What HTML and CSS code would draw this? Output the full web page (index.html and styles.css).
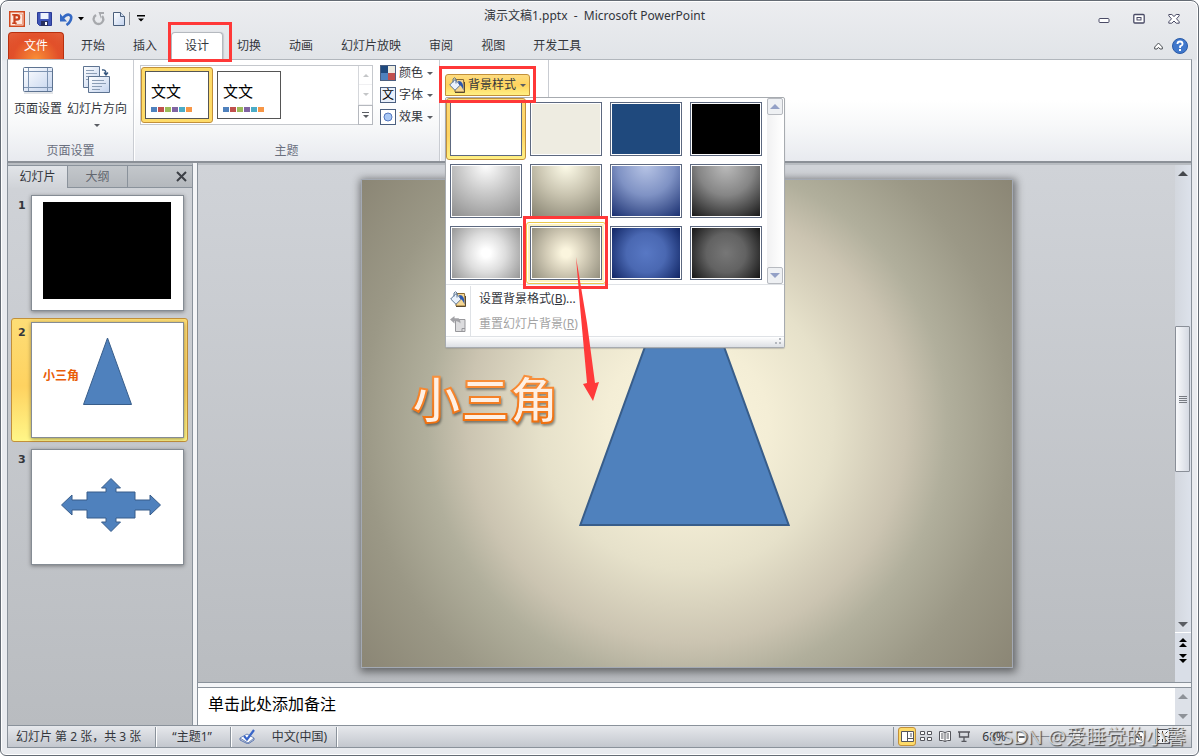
FILE: index.html
```html
<!DOCTYPE html>
<html lang="zh-CN">
<head>
<meta charset="utf-8">
<title>演示文稿1.pptx - Microsoft PowerPoint</title>
<link rel="stylesheet" href="styles.css">
</head>
<body>
<svg class="defs" width="0" height="0" aria-hidden="true">
  <defs>
    <linearGradient id="paper" x1="0" y1="0" x2="1" y2="1"><stop offset="0" stop-color="#fff"/><stop offset="1" stop-color="#c3d3ee"/></linearGradient>
    <linearGradient id="art" x1="0" y1="0" x2="0" y2="1"><stop offset="0" stop-color="#fb9a4b"/><stop offset="1" stop-color="#ee6a06"/></linearGradient>
    <symbol id="bucket" viewBox="0 0 16 16">
      <path d="M7 2.500h7.500l1 12.500h-9.500z" fill="#f5d692" stroke="#8a6a30"/>
      <path d="M15.500 5v10.500H6" fill="none" stroke="#5a4a30"/>
      <path d="M.7 8 6 2.600l5.300 5.400L6 13.300z" fill="#eaf2fc" stroke="#5b7594"/>
      <path d="M4 5.500V2Q5.500-.5 7 2v4.500" fill="none" stroke="#5b7594"/>
      <path d="M9 4Q15 3.500 14.500 13.500 12.500 8.500 10 7.500z" fill="#2b58b0"/>
    </symbol>
  </defs>
</svg>
<div class="window">
  <header class="titlebar">
    <div class="quick">
      <svg width="16" height="16" viewBox="0 0 16 16"><rect x=".75" y=".75" width="14.500" height="14.500" fill="#fde8df" stroke="#d1491f" stroke-width="1.500"/><path d="M10 3h3.500v10.500H6" fill="none" stroke="#eda184"/><path d="M5.500 12V4.200h2.300q2.400 0 2.400 2.200T7.800 8.600h-2" fill="none" stroke="#c8401c" stroke-width="2.200"/><path d="M3.200 3.700h3M3.200 12.300h4.500" stroke="#c8401c" stroke-width="1.500"/></svg>
      <i class="qsep"></i>
      <button class="icon" aria-label="保存"><svg width="15" height="14" viewBox="0 0 15 14"><path d="M.5.500h14v13h-12l-2-2z" fill="#4056b8" stroke="#2b3a94"/><path d="M3.500 1h8v6h-8z" fill="#eef3fd"/><path d="M4 9h7v5H4z" fill="#28305e"/><path d="M8 10h2v3H8z" fill="#fff"/></svg></button>
      <button class="icon undo" aria-label="撤消"><svg width="13" height="14" viewBox="0 0 13 14"><path d="M3 6Q6 2.200 9 2.700 12.500 3.700 10.500 8.500 9.500 11 6.500 13" fill="none" stroke="#3569c4" stroke-width="2.600"/><path d="M0 1.500v8h7z" fill="#3569c4"/></svg><svg width="6" height="4" viewBox="0 0 6 4"><path d="M0 0h6L3 3.500z"/></svg></button>
      <button class="icon" aria-label="重复"><svg width="13" height="14" viewBox="0 0 13 14"><path d="M4 3Q1 5 1.800 8 3 12 6.500 12T11.300 8Q11.500 6 10 4" fill="none" stroke="#a7a9ad" stroke-width="2.400"/><path d="M6.500 0H12v2H9v5z" fill="#a7a9ad"/></svg></button>
      <button class="icon" aria-label="新建"><svg width="12" height="14" viewBox="0 0 12 14"><path d="M.5.500h7l4 4v9H.5z" fill="url(#paper)" stroke="#4a5f7c"/><path d="M7.500.5v4h4" fill="#cfdcef" stroke="#4a5f7c"/></svg></button>
      <i class="qsep"></i>
      <button class="icon" aria-label="自定义快速访问工具栏"><svg width="8" height="7" viewBox="0 0 8 7"><path d="M0 0h8v1.400H0zM1 3.500h6L4 6.500z"/></svg></button>
    </div>
    <h1>演示文稿1.pptx&nbsp; -&nbsp; Microsoft PowerPoint</h1>
    <div class="wincontrols">
      <button class="icon" aria-label="最小化"><svg width="12" height="12" viewBox="0 0 12 12"><rect x="1" y="5.500" width="10" height="4" rx="1" fill="#fff" stroke="#4a4b66"/></svg></button>
      <button class="icon" aria-label="还原"><svg width="12" height="12" viewBox="0 0 12 12"><rect x=".8" y="1.500" width="10.400" height="8.500" rx="1" fill="#fff" stroke="#4a4b66" stroke-width="1.300"/><rect x="4" y="4.500" width="4" height="2.500" fill="#fff" stroke="#4a4b66"/></svg></button>
      <button class="icon" aria-label="关闭"><svg width="12" height="12" viewBox="0 0 12 12"><path d="M.8 1.500h3L6 3.500l2.200-2h3v1.300L8.500 5.800l2.700 3v1.400h-3L6 8l-2.200 2.200h-3V8.800l2.700-3L.8 2.800z" fill="#fff" stroke="#4a4b66"/></svg></button>
    </div>
  </header>
  <nav class="tabs">
    <button class="tab file">文件</button>
    <button class="tab">开始</button>
    <button class="tab">插入</button>
    <div class="tabwrap"><button class="tab active">设计</button><span class="mark mark-tab"></span></div>
    <button class="tab">切换</button>
    <button class="tab">动画</button>
    <button class="tab">幻灯片放映</button>
    <button class="tab">审阅</button>
    <button class="tab">视图</button>
    <button class="tab">开发工具</button>
    <div class="tabtools">
      <button class="icon" aria-label="功能区最小化"><svg width="9" height="8" viewBox="0 0 9 8"><path d="M.7 5 4.500 1l3.800 4v2H6L4.500 5.300 3 7H.7z" fill="#fff" stroke="#4c5056"/></svg></button>
      <button class="icon" aria-label="帮助"><svg width="16" height="16" viewBox="0 0 16 16"><circle cx="8" cy="8" r="7.500" fill="#4078cc" stroke="#2a5ba8"/><path d="M5.400 6Q5.500 3.500 8 3.500T10.600 6Q10.500 7.300 8.100 8.300V10" fill="none" stroke="#fff" stroke-width="1.800"/><rect x="7" y="11" width="2" height="2" fill="#fff"/></svg></button>
    </div>
  </nav>
  <main class="body">
    <section class="ribbon">
      <div class="group page">
        <div class="gbody">
          <button class="big"><svg width="32" height="28" viewBox="0 0 32 28"><rect x="1.500" y="1.500" width="29" height="24" rx="1" fill="url(#paper)" stroke="#5d7391"/><path d="M6.500 2v23M25.500 2v23M2 5.500h28M2 21.500h28" stroke="#7e94b2" fill="none"/><path d="M2 27h29" stroke="#c8ccd2"/></svg><span>页面设置</span></button>
          <button class="big"><svg width="28" height="28" viewBox="0 0 28 28"><path d="M.5.500h16v21H.5z" fill="url(#paper)" stroke="#5d7391"/><path d="M3 4.500h8M3 7.500h11M3 10.500h9M3 13.500h4" stroke="#8b9db5"/><path d="M5.500 10.500h21v16h-21z" fill="url(#paper)" stroke="#5d7391"/><path d="M9 14.500h12M9 17.500h14M9 20.500h10M9 23.500h8" stroke="#8b9db5"/><path d="M19 4q4-1 4 4M21 6.500l2 2.500 2-2.500" fill="none" stroke="#35567f" stroke-width="1.300"/></svg><span>幻灯片方向</span><i class="down"></i></button>
        </div>
        <h2>页面设置</h2>
      </div>
      <div class="group theme">
        <div class="gbody">
          <div class="gallery">
            <button class="themeitem selected"><span class="themecard">文文<span class="chips"><i class="c1"></i><i class="c2"></i><i class="c3"></i><i class="c4"></i><i class="c5"></i><i class="c6"></i></span></span></button>
            <button class="themeitem"><span class="themecard">文文<span class="chips"><i class="c1"></i><i class="c2"></i><i class="c3"></i><i class="c4"></i><i class="c5"></i><i class="c6"></i></span></span></button>
            <div class="gscroll">
              <button aria-label="上一行" disabled><i class="up"></i></button>
              <button aria-label="下一行" disabled><i class="down"></i></button>
              <button aria-label="其他"><i class="line"></i><i class="down"></i></button>
            </div>
          </div>
          <div class="options">
            <button class="opt"><svg width="16" height="16" viewBox="0 0 16 16"><path d="M0 0h8v8H0z" fill="#1f497d"/><path d="M8 0h8v8H8z" fill="#eeece1"/><path d="M0 8h8v8H0z" fill="#4f81bd"/><path d="M8 8h8v8H8z" fill="#c0504d"/><rect x=".5" y=".5" width="15" height="15" fill="none" stroke="#4b5f80"/></svg>颜色<i class="down"></i></button>
            <button class="opt"><span class="fonticon">文</span>字体<i class="down"></i></button>
            <button class="opt"><svg width="16" height="16" viewBox="0 0 16 16"><rect x=".5" y=".5" width="15" height="15" fill="#fff" stroke="#4b5f80"/><circle cx="8" cy="8" r="4" fill="#a9c8f5" stroke="#5578c0"/></svg>效果<i class="down"></i></button>
          </div>
        </div>
        <h2>主题</h2>
      </div>
      <div class="group background">
        <button class="bgbutton"><svg width="16" height="16"><use href="#bucket"/></svg>背景样式<i class="down"></i></button>
        <div class="menu">
          <div class="picker">
            <div class="swatches">
              <button class="swatch chosen" aria-label="样式 1"><i class="s1"></i></button>
              <button class="swatch" aria-label="样式 2"><i class="s2"></i></button>
              <button class="swatch" aria-label="样式 3"><i class="s3"></i></button>
              <button class="swatch" aria-label="样式 4"><i class="s4"></i></button>
              <button class="swatch" aria-label="样式 5"><i class="s5"></i></button>
              <button class="swatch" aria-label="样式 6"><i class="s6"></i></button>
              <button class="swatch" aria-label="样式 7"><i class="s7"></i></button>
              <button class="swatch" aria-label="样式 8"><i class="s8"></i></button>
              <button class="swatch" aria-label="样式 9"><i class="s9"></i></button>
              <button class="swatch hover" aria-label="样式 10"><i class="s10"></i><span class="mark mark-swatch"></span></button>
              <button class="swatch" aria-label="样式 11"><i class="s11"></i></button>
              <button class="swatch" aria-label="样式 12"><i class="s12"></i></button>
            </div>
            <div class="pscroll"><button aria-label="向上"><i class="up"></i></button><button aria-label="向下"><i class="down"></i></button></div>
          </div>
          <div class="commands">
            <button class="command"><span class="cicon"><svg width="16" height="16"><use href="#bucket"/></svg></span><span>设置背景格式(<u>B</u>)...</span></button>
            <button class="command" disabled><span class="cicon"><svg width="16" height="16" viewBox="0 0 16 16"><path d="M5.500 3.500h9.500v12h-9.500z" fill="#dcdcde" stroke="#97979b"/><path d="M12 15.500v-3h3" fill="none" stroke="#97979b"/><path d="M0 3.500 4.500 0v2.200h4q2 1 2 5.300-1.500-2.500-6-2.500v2.500z" fill="#a2a2a6"/></svg></span><span>重置幻灯片背景(<u>R</u>)</span></button>
          </div>
          <div class="grip"><svg width="8" height="8" viewBox="0 0 8 8"><path d="M5 0h2v2H5zM1 4h2v2H1zM5 4h2v2H5z" fill="#b4b8be"/></svg></div>
          <svg class="arrow" width="20" height="146" viewBox="0 0 20 146"><path d="M2 0 6 49l7 77-4 1 10 17 6-19-4 1-8-60z" fill="#ff3a3a"/></svg>
        </div>
        <span class="mark mark-button"></span>
      </div>
    </section>
    <section class="work">
      <aside class="panel">
        <div class="ptabs"><button class="ptab on">幻灯片</button><button class="ptab">大纲</button><button class="pclose" aria-label="关闭"><svg width="11" height="11" viewBox="0 0 11 11"><path d="M1 1l9 9M10 1l-9 9" stroke="#3c4046" stroke-width="2"/></svg></button></div>
        <ol class="slides">
          <li class="item"><b>1</b><svg class="thumb" viewBox="0 0 151 114"><path d="M11 6h128v97H11z"/></svg></li>
          <li class="item current"><b>2</b><svg class="thumb" viewBox="0 0 151 114"><path d="M75.500 15 99.500 81.500H51.500z" fill="#4f81bd" stroke="#385d8a"/><text x="11" y="57" class="arttext" font-size="12">小三角</text></svg></li>
          <li class="item"><b>3</b><svg class="thumb" viewBox="0 0 151 114"><path d="M79 28.500 88.500 38H84v4h19v8h15v-5l10.500 10-10.500 10v-5h-15v8H84v4h4.500L79 81.500 69.500 72H74v-4H55v-8H40v5L29.500 55 40 45v5h15v-8h19v-4h-4.500z" fill="#4f81bd" stroke="#385d8a"/></svg></li>
        </ol>
      </aside>
      <div class="editor">
        <div class="stage">
          <div class="canvas">
            <svg class="slide" viewBox="0 0 652 488">
              <path d="M323.500 58 428 346H219z" fill="#4f81bd" stroke="#385d8a" stroke-width="2"/>
              <text x="50" y="239" class="arttext large" font-size="49">小三角</text>
            </svg>
          </div>
          <div class="vscroll">
            <button aria-label="向上滚动"><i class="up"></i></button>
            <div class="track"><div class="knob"><i></i><i></i><i></i><i></i></div></div>
            <button aria-label="向下滚动"><i class="down"></i></button>
            <div class="pager">
              <button class="icon" aria-label="上一张幻灯片"><svg width="8" height="9" viewBox="0 0 8 9"><path d="M4 0l4 4H0zM4 5l4 4H0z"/></svg></button>
              <button class="icon" aria-label="下一张幻灯片"><svg width="8" height="9" viewBox="0 0 8 9"><path d="M0 0h8L4 4zM0 5h8L4 9z"/></svg></button>
            </div>
          </div>
        </div>
        <div class="notes"><label class="note">单击此处添加备注</label><div class="nscroll"><i class="up"></i><i class="down"></i></div></div>
      </div>
    </section>
    <footer class="status">
      <span class="cell first">幻灯片 第 2 张，共 3 张</span>
      <span class="cell">“主题1”</span>
      <span class="cell check"><svg width="17" height="15" viewBox="0 0 17 15"><path d="M1 9l7-4 7 4-6 5z" fill="#fff" stroke="#7088b8"/><path d="M1 9v2l8 4 6-4V9" fill="none" stroke="#5d78b4"/><path d="M5 7l3 3.500L15 1" fill="none" stroke="#3865c8" stroke-width="2.200"/></svg></span>
      <span class="cell">中文(中国)</span>
      <div class="views">
        <button class="view on" aria-label="普通视图"><svg width="13" height="11" viewBox="0 0 13 11"><path d="M.5.500h12v10H.5zM6.500 0v11M7 7.500h5M9 3h2M9 5h2" fill="#fff" stroke="#55565c"/></svg></button>
        <button class="view" aria-label="幻灯片浏览"><svg width="12" height="11" viewBox="0 0 12 11"><path d="M.5.500h4v3h-4zM7.500.500h4v3h-4zM.5 6.500h4v3h-4zM7.500 6.500h4v3h-4z" fill="#fff" stroke="#55565c"/></svg></button>
        <button class="view" aria-label="阅读视图"><svg width="12" height="11" viewBox="0 0 12 11"><path d="M6 1.500Q3 .2.500.500v9Q4 9 6 10.500 8 9 11.500 9.500v-9Q9 .2 6 1.500zv9M2 3h2.500M2 5h2.500M2 7h2.500M7.500 3H10M7.500 5H10M7.500 7H10" fill="#fff" stroke="#55565c"/></svg></button>
        <button class="view" aria-label="幻灯片放映"><svg width="12" height="11" viewBox="0 0 12 11"><path d="M0 1h12M1.500 1v5h9V1M6 6v4M3.500 10.500h5" fill="none" stroke="#55565c" stroke-width="1.300"/></svg></button>
      </div>
      <div class="zoom">
        <span>68%</span>
        <button class="icon" aria-label="缩小"><svg width="14" height="14" viewBox="0 0 14 14"><circle cx="7" cy="7" r="6" fill="#fff" stroke="#777b82"/><path d="M4 7h6" stroke="#333" stroke-width="1.500"/></svg></button>
        <input type="range" min="10" max="180" value="88" aria-label="显示比例">
        <button class="icon" aria-label="放大"><svg width="14" height="14" viewBox="0 0 14 14"><circle cx="7" cy="7" r="6" fill="#fff" stroke="#777b82"/><path d="M4 7h6M7 4v6" stroke="#333" stroke-width="1.500"/></svg></button>
        <button class="icon fit" aria-label="适应窗口"><svg width="15" height="15" viewBox="0 0 15 15"><rect x=".5" y=".5" width="14" height="14" fill="#f3f4f6" stroke="#55565c"/><path d="M7.500 2v3M7.500 10v3M2 7.500h3M10 7.500h3M2.500 2.500l2 2M12.500 2.500l-2 2M2.500 12.500l2-2M12.500 12.500l-2-2" stroke="#333"/></svg></button>
      </div>
      <span class="watermark">CSDN @爱睡觉的小馨</span>
    </footer>
  </main>
</div>
</body>
</html>
```
FILE: styles.css
```css
* { box-sizing: border-box; }
body { margin: 0; background: #fff; color: #33363c; font: 12px/16px "Noto Sans", "Noto Sans CJK SC", sans-serif; }
button { font: inherit; color: inherit; background: none; border: 0; padding: 0; }
h1, h2, ol { margin: 0; padding: 0; font: inherit; }
svg { display: block; flex: none; }
i { display: block; font-style: normal; }
.defs { position: absolute; }
.icon { display: flex; align-items: center; }
.up, .down { width: 0; height: 0; flex: none; border: 3px solid transparent; }
.down { border-top-color: #5a5d63; border-bottom: 0; }
.up { border-bottom-color: #5a5d63; border-top: 0; }
.mark { position: absolute; border: 3px solid #ff3838; pointer-events: none; z-index: 6; }

.window { min-height: 100vh; display: flex; flex-direction: column; padding: 0 6px; border: 1px solid #646b74; border-radius: 8px 8px 6px 6px; background: linear-gradient(#ecedf0, #e1e4e8 58px, #e9ebef 60px); box-shadow: inset 0 0 0 1px #fff; }
.titlebar { display: grid; grid-template-columns: 1fr auto 1fr; align-items: center; height: 31px; padding: 4px 12px 0 2px; }
.titlebar h1 { padding-bottom: 5px; }
.quick { display: flex; align-items: center; gap: 8px; }
.qsep { width: 1px; height: 13px; background: #8f9399; margin: 0 -3px 0 -4px; }
.quick .qsep + .icon { margin-left: 2px; }
.undo { gap: 5px; }
.wincontrols { display: flex; justify-content: flex-end; gap: 23px; }

.tabs { display: flex; height: 27px; padding-left: 1px; }
.tab { padding: 0 14px; height: 27px; }
.file { padding: 0 15px; margin-right: 3px; color: #fff; border: 1px solid #b8300f; border-bottom: 0; border-radius: 4px 4px 0 0; background: radial-gradient(ellipse at 50% 100%, #f98e35, #e2502a 60%, transparent), linear-gradient(#e5613c, #d8451f); }
.tabwrap { position: relative; }
.active { background: #fff; border: 1px solid #b5b9bf; border-bottom: 0; border-radius: 4px 4px 0 0; padding: 0 13px; box-shadow: 1px 0 1px #c7cacf; }
.mark-tab { inset: -10px -9px -3px -3px; }
.tabtools { display: flex; align-items: center; gap: 9px; margin-left: auto; padding-right: 4px; }

.body { flex: 1; display: flex; flex-direction: column; border: 1px solid #8a929b; border-top-color: #b1b6bc; margin-bottom: 7px; }
.ribbon { display: flex; height: 103px; background: linear-gradient(#fff 40%, #f7f8f9 65%, #e8eaef); border-bottom: 2px solid #8b9097; }
.group { display: flex; flex-direction: column; border-right: 1px solid #c9ccd2; box-shadow: 1px 0 #fff; }
.group h2 { margin-top: auto; padding-bottom: 2px; text-align: center; color: #6a6f7e; }
.page .gbody { display: flex; gap: 5px; padding: 6px 6px 0; }
.big { display: flex; flex-direction: column; align-items: center; gap: 7px; white-space: nowrap; }
.theme .gbody { display: flex; gap: 7px; padding: 5px 6px 0; }
.gallery { display: flex; height: 60px; width: 233px; border: 1px solid #c5c8cd; background: #fff; }
.themeitem { padding: 3px; border: 1px solid transparent; border-radius: 3px; margin: 1px 0 1px 0; }
.themeitem:nth-child(2) { margin-right: auto; }
.selected { border-color: #c2903a; background: #fedb69; }
.themecard { display: flex; flex-direction: column; justify-content: flex-end; gap: 6px; width: 64px; height: 48px; padding: 0 5px 6px; border: 1px solid #555; background: #fff; color: #000; font-size: 15px; line-height: 20px; text-align: left; }
.chips { display: flex; gap: 1px; }
.chips i { width: 6px; height: 5px; }
.c1 { background: #4f81bd; } .c2 { background: #c0504d; } .c3 { background: #9bbb59; } .c4 { background: #8064a2; } .c5 { background: #4bacc6; } .c6 { background: #f79646; }
.gscroll { display: grid; grid-template-rows: 1fr 1fr 1fr; width: 14px; border-left: 1px solid #d5d7db; }
.gscroll button { display: flex; flex-direction: column; align-items: center; justify-content: center; gap: 2px; border-bottom: 1px solid #d5d7db; }
.gscroll button:last-child { border: 1px solid #b5b8be; margin: 0 -1px -1px -1px; }
.gscroll :disabled { opacity: .35; }
.line { width: 7px; height: 1px; background: #5a5d63; }
.options { display: flex; flex-direction: column; gap: 6px; }
.opt { display: flex; align-items: center; gap: 3px; height: 16px; }
.opt .down { margin-left: 1px; }
.fonticon { width: 16px; height: 16px; border: 1px solid #4b5f80; background: #e9f0fb; color: #000; line-height: 13px; }

.background { position: relative; width: 109px; align-items: flex-start; padding: 14px 5px 0; }
.bgbutton { display: flex; align-items: center; gap: 3px; height: 22px; padding: 0 3px; border: 1px solid #c2903a; border-radius: 3px 3px 0 0; background: linear-gradient(#fddc80, #ffd35d 50%, #fff083); white-space: nowrap; }
.bgbutton .down { margin-left: 1px; }
.mark-button { inset: 6px 12px auto -1px; height: 37px; }
.menu { position: absolute; top: 37px; left: 5px; z-index: 5; width: 340px; background: #fff; border: 1px solid #a7abb0; border-radius: 2px; box-shadow: 0 1px 1px #8886; }
.picker { display: flex; justify-content: space-between; padding-right: 1px; border-bottom: 1px solid #dfe2e6; }
.swatches { display: grid; grid-template-columns: repeat(4, 80px); grid-auto-rows: 62px; }
.swatch { position: relative; padding: 3px; border: 1px solid transparent; border-radius: 3px; }
.swatch > i { height: 54px; border: 1px solid #5d6980; padding: 1px; background-color: #fff; box-shadow: inset 0 0 0 1px #fff; }
.chosen { border-color: #c2903a; background: linear-gradient(#fdd872, #fed566 60%, #fff083); }
.hover { border-color: #ecc94c; background: #fff3c0; box-shadow: inset 0 0 0 1px #fff; }
.swatch .s2 { background-color: #eeece1; }
.swatch .s3 { background-color: #1f497d; }
.swatch .s4 { background-color: #000; }
.s5 { background-image: radial-gradient(ellipse 90% 130% at 50% 0, #fff, #ccc 40%, #858585); }
.s6 { background-image: radial-gradient(ellipse 90% 130% at 50% 0, #fffdea, #c9c4b0 45%, #7d7968); }
.s7 { background-image: radial-gradient(ellipse 90% 130% at 50% 0, #b8c5e6, #7f92c4 45%, #0b2164); }
.s8 { background-image: radial-gradient(ellipse 90% 130% at 50% 0, #bcbcbc, #858585 45%, #080808); }
.s9 { background-image: radial-gradient(circle at 50% 50%, #fff 10%, #ddd 45%, #929292); }
.s10 { background-image: radial-gradient(circle at 50% 50%, #fbf5de 10%, #d3ccb7 45%, #8f8b7b); }
.s11 { background-image: radial-gradient(circle at 50% 50%, #5878c4, #4a68b2 45%, #0d215f); }
.s12 { background-image: radial-gradient(circle at 50% 50%, #777, #626262 45%, #111); }
.mark-swatch { inset: -7px -3px -6px -4px; }
.pscroll { display: flex; flex-direction: column; justify-content: space-between; width: 16px; background: linear-gradient(90deg, #f1f1f2, #fff); }
.pscroll button { display: flex; align-items: center; justify-content: center; height: 17px; border: 1px solid #b7bac0; border-radius: 2px; background: #eef0f3; }
.pscroll i { border-width: 5px; }
.pscroll .up { border-bottom-color: #93a0c6; border-top: 0; }
.pscroll .down { border-top-color: #93a0c6; border-bottom: 0; }
.commands { padding: 1px 0 0; }
.command { display: flex; align-items: center; width: 100%; height: 25px; gap: 8px; white-space: nowrap; }
.cicon { display: flex; align-items: center; width: 25px; height: 25px; padding-left: 4px; border-right: 1px solid #dfe2e6; }
.command:disabled { color: #a3a3a3; }
.grip { display: flex; justify-content: flex-end; align-items: center; height: 11px; border-top: 1px solid #dfe2e6; background: linear-gradient(#fff, #dde0e5); padding-right: 2px; }
.arrow { position: absolute; left: 128px; top: 159px; z-index: 7; overflow: visible; }

.work { flex: 1; display: grid; grid-template-columns: 185px minmax(0, 1fr); gap: 4px; background: #f4f5f7; border-bottom: 1px solid #8a929b; }
.panel { border-right: 1px solid #8a929b; background: linear-gradient(#d0d3d8, #b9bcc0); border-top: 2px solid #b9bdc2; }
.ptabs { display: grid; grid-template-columns: 60px 60px 1fr; height: 23px; border-top: 1px solid #8a929b; }
.ptab, .pclose { background: linear-gradient(#c3c7cb, #b4b8bd); border-right: 1px solid #8a929b; border-bottom: 1px solid #8a929b; color: #62666e; }
.pclose { display: flex; align-items: center; justify-content: flex-end; padding-right: 5px; border-right: 0; }
.ptab.on { background: linear-gradient(#e1e4e8, #d0d3d8); border-bottom: 0; color: #33363c; }
.slides { display: grid; gap: 3px; padding: 3px 4px 0 3px; list-style: none; }
.item { display: grid; grid-template-columns: 16px 153px; padding: 3px; border: 1px solid transparent; border-radius: 3px; }
.item b { padding-left: 3px; font: bold 11px/22px "DejaVu Sans", sans-serif; }
.current { border-color: #c2903a; background: linear-gradient(#fddd76, #fed260 55%, #fff688); }
.thumb { width: 153px; height: 116px; border: 1px solid #858c94; background: #fff; box-shadow: 0 1px 4px #0006; }
.arttext { font-family: "Noto Sans CJK SC", sans-serif; font-weight: bold; fill: #e95d08; }
.large { fill: #fff0e4; stroke: url(#art); stroke-width: 2; filter: drop-shadow(1px 2px 1px #0006); }

.editor { display: flex; flex-direction: column; gap: 4px; border-left: 1px solid #8a929b; }
.stage { flex: 1; display: flex; border-top: 2px solid #b9bdc2; border-bottom: 1px solid #8a929b; background: linear-gradient(#d0d3d8, #b9bcc0); }
.canvas { flex: 1; min-width: 0; display: flex; align-items: center; justify-content: center; padding: 14px; }
.slide { flex: 0 1 652px; min-width: 0; border: 1px solid #a3a9b3; background: radial-gradient(circle farthest-corner, #fbf5dd, #f4eed6 20%, #e6e1ca 36%, #cbc4b1 54%, #b1af9c 64%, #9b9886 80%, #8b8675); box-shadow: 1px 2px 8px 2px #0007; }
.vscroll { display: flex; flex-direction: column; width: 16px; background: linear-gradient(90deg, #d3d7de, #dde2eb); }
.vscroll > button { display: flex; align-items: center; justify-content: center; height: 16px; }
.vscroll .up, .vscroll .down { border-left-width: 5px; border-right-width: 5px; }
.vscroll .up { border-bottom-width: 5px; border-bottom-color: #45484d; }
.vscroll .down { border-top-width: 5px; }
.track { flex: 1; display: flex; flex-direction: column; padding: 0 1px 0 0; }
.track::before { content: ""; flex: 146; }
.track::after { content: ""; flex: 145; }
.knob { flex: 145; display: flex; flex-direction: column; align-items: center; justify-content: center; gap: 1px; border: 1px solid #8a8f98; border-radius: 1px; background: linear-gradient(90deg, #f8f9fb, #d5d9e2); }
.knob i { width: 8px; height: 1px; background: #777b82; }
.pager { display: flex; flex-direction: column; align-items: center; gap: 7px; height: 50px; padding-top: 5px; border-top: 1px solid #fff; background: #d9dee7; }
.notes { display: flex; height: 38px; border-top: 1px solid #8a929b; background: #fff; }
.note { flex: 1; padding: 4px 10px; color: #000; font-size: 16px; line-height: 24px; }
.nscroll { display: flex; flex-direction: column; align-items: center; justify-content: space-between; width: 16px; padding: 6px 0; background: #dde1e8; }
.nscroll i { border-width: 5px; opacity: .6; }
.nscroll .up { border-top: 0; }
.nscroll .down { border-bottom: 0; }

.status { position: relative; display: flex; align-items: center; height: 21px; background: linear-gradient(#e6e8ec, #c3c7ce); white-space: nowrap; }
.cell { display: flex; align-items: center; height: 20px; padding: 0 9px 0 16px; border-right: 1px solid #8a929b; box-shadow: 1px 0 #fff; }
.cell.first { padding: 0 14px 0 8px; }
.cell:nth-child(2) { padding-right: 18px; }
.cell.check { border: 0; box-shadow: none; padding: 0 0 0 8px; }
.views { display: flex; align-items: center; margin-left: auto; padding-left: 4px; border-left: 1px solid #8a929b; }
.view { display: flex; align-items: center; justify-content: center; width: 18px; height: 19px; margin-right: 1px; border: 1px solid transparent; border-radius: 3px; }
.view.on { border-color: #c2903a; background: #fedb69; }
.zoom { display: flex; align-items: center; padding: 0 21px 0 8px; gap: 9px; }
.zoom input { appearance: none; width: 95px; height: 14px; margin: 0 -5px; background: linear-gradient(#858a92, #858a92) center / 100% 1px no-repeat; }
.zoom input::-webkit-slider-thumb { appearance: none; width: 9px; height: 13px; border: 1px solid #777b82; border-radius: 1px 1px 5px 5px; background: #fff; }
.watermark { position: absolute; right: 5px; top: 0; color: #eef0f2bb; font-size: 20px; line-height: 22px; text-shadow: 1px 1px 1px #444; pointer-events: none; }
```
